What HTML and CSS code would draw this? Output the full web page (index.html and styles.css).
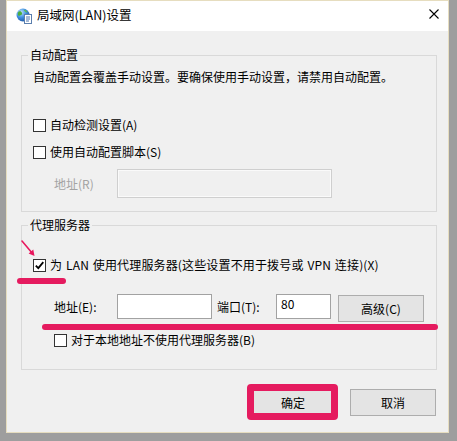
FILE: index.html
```html
<!DOCTYPE html>
<html lang="zh-CN">
<head>
<meta charset="utf-8">
<title>局域网(LAN)设置</title>
<link rel="stylesheet" href="styles.css">
</head>
<body>
<div class="window">
  <div class="titlebar">
    <svg class="app-icon" width="16" height="16" viewBox="0 0 16 16">
      <defs>
        <radialGradient id="g" cx="0.35" cy="0.3" r="0.8">
          <stop offset="0" stop-color="#bfe3ff"/>
          <stop offset="0.5" stop-color="#3d8ee0"/>
          <stop offset="1" stop-color="#1a4f9c"/>
        </radialGradient>
      </defs>
      <circle cx="7" cy="7" r="6.5" fill="url(#g)"/>
      <path d="M3 3.5c1.5-.5 2.5.3 3 1.5s-.5 2-1.5 2.3S3 8.5 2.2 7.2 2 4 3 3.5z" fill="#4caf3c"/>
      <path d="M8 1.8c1.5.2 3 1.2 3.6 2.6-.8.4-1.8 0-2.3-.6S7.6 2.4 8 1.8z" fill="#5cbf48"/>
      <rect x="8.5" y="6.5" width="7" height="9" fill="#fff" stroke="#5b7fae"/>
      <path d="M10 9h4M10 11h4M10 13h3" stroke="#4a74b0" stroke-width="1"/>
    </svg>
    <span class="title">局域网(LAN)设置</span>
    <svg class="close" width="10" height="10" viewBox="0 0 10 10">
      <path d="M0.5 0.5L9.5 9.5M9.5 0.5L0.5 9.5" stroke="#000" stroke-width="1.1"/>
    </svg>
  </div>

  <div class="client">
    <fieldset class="group group-auto">
      <legend>自动配置</legend>
      <div class="group-body">
        <div class="desc">自动配置会覆盖手动设置。要确保使用手动设置，请禁用自动配置。</div>
        <div class="check-row row-a"><span class="box"></span><span>自动检测设置(A)</span></div>
        <div class="check-row row-s"><span class="box"></span><span>使用自动配置脚本(S)</span></div>
        <div class="addr-row addr-r">
          <span class="label disabled">地址(R)</span>
          <span class="field field-disabled"></span>
        </div>
      </div>
    </fieldset>

    <fieldset class="group group-proxy">
      <legend>代理服务器</legend>
      <div class="group-body">
        <div class="check-row row-x">
          <span class="box checked">
            <svg width="11" height="11" viewBox="0 0 11 11"><path d="M1.8 5.6L4.3 8.2L9.3 2.2" fill="none" stroke="#000" stroke-width="1.8"/></svg>
          </span>
          <span class="wide">为 LAN 使用代理服务器(这些设置不用于拨号或 VPN 连接)(X)</span>
        </div>
        <div class="addr-row addr-e">
          <span class="label">地址(E):</span>
          <span class="field field-addr"></span>
          <span class="label port-label">端口(T):</span>
          <span class="field field-port">80</span>
          <span class="btn btn-adv">高级(C)</span>
        </div>
        <div class="check-row row-b"><span class="box"></span><span>对于本地地址不使用代理服务器(B)</span></div>
      </div>
    </fieldset>

    <div class="buttons">
      <span class="btn-wrap highlight"><span class="btn btn-ok">确定</span></span>
      <span class="btn btn-cancel">取消</span>
    </div>
  </div>
</div>

<div class="mark mark-check"></div>
<div class="mark mark-addr"></div>
<svg class="arrow" width="16" height="18" viewBox="0 0 16 18">
  <path d="M1 1L11.5 13.5" stroke="#e8185e" stroke-width="1.6" stroke-linecap="round"/>
  <path d="M13.5 16L7.6 13.6L12.3 9.6Z" fill="#e8185e"/>
</svg>
</body>
</html>
```

FILE: styles.css
```css
html, body {
  margin: 0;
  padding: 0;
}
body {
  position: relative;
  width: 457px;
  height: 441px;
  overflow: hidden;
  background: #9e9e9e;
  font-family: "Noto Sans CJK SC", "Microsoft YaHei", sans-serif;
  font-size: 12px;
  color: #000;
}
.window {
  margin-left: 6px;
  width: 443px;
  height: 433px;
  box-sizing: border-box;
  border: 1px solid #e6ddbf;
  background: #f0f0f0;
  display: flex;
  flex-direction: column;
}
.titlebar {
  height: 30px;
  flex: none;
  background: #fff;
  display: flex;
  align-items: center;
  padding: 0 9px 0 9px;
}
.app-icon {
  flex: none;
  margin-top: -1px;
}
.title {
  margin-left: 5px;
  line-height: 16px;
  margin-top: -2px;
  flex: 1;
  font-size: 12.5px;
}
.close {
  flex: none;
  margin-top: -4px;
}
.client {
  flex: 1;
  padding: 0 11px 0 14px;
}
.group {
  margin: 0;
  padding: 0;
  min-width: 0;
  border: 1px solid #d9d9d9;
}
.group legend {
  margin-left: 6px;
  padding: 0 2px;
  line-height: 14px;
}
.group-auto {
  margin-top: 17px;
}
.group-proxy {
  margin-top: 6px;
}
.group-body {
  padding: 0 0 0 11px;
}
.group-auto .group-body {
  padding-bottom: 13px;
}
.group-proxy .group-body {
  padding-bottom: 21px;
}
.desc {
  margin-top: 7px;
  line-height: 16px;
}
.check-row {
  display: flex;
  align-items: center;
  height: 16px;
  line-height: 16px;
}
.wide {
  word-spacing: 1px;
  letter-spacing: 0.15px;
}
.box {
  width: 13px;
  height: 13px;
  box-sizing: border-box;
  border: 1px solid #333;
  background: #fff;
  margin-right: 4px;
  flex: none;
  display: flex;
  align-items: center;
  justify-content: center;
}
.row-a { margin-top: 32px; }
.row-s { margin-top: 11px; }
.row-x { margin-top: 25px; }
.row-b { margin-top: 10px; padding-left: 21px; }

.addr-row {
  display: flex;
  align-items: flex-start;
  padding-left: 21px;
}
.addr-r {
  margin-top: 9px;
  align-items: center;
}
.addr-e {
  margin-top: 21px;
}
.label {
  width: 63px;
  flex: none;
  line-height: 16px;
}
.addr-e .label {
  padding-top: 5px;
}
.disabled {
  color: #a3a3a3;
}
.field {
  box-sizing: border-box;
  flex: none;
  background: #fff;
  border: 1px solid #a2a2a2;
  height: 25px;
  line-height: 16px;
}
.field-disabled {
  width: 215px;
  height: 29px;
  background: #f0f0f0;
  border-color: #cfcfcf;
  box-shadow: inset 0 0 0 1px #fafafa;
}
.field-addr {
  width: 95px;
}
.port-label {
  width: 59px;
  margin-left: 5px;
}
.field-port {
  width: 55px;
  padding: 1px 0 0 4px;
}
.btn {
  box-sizing: border-box;
  display: flex;
  align-items: center;
  justify-content: center;
  width: 86px;
  height: 27px;
  background: #e4e4e4;
  border: 1px solid #adadad;
  line-height: 16px;
  flex: none;
}
.btn-adv {
  margin-left: 7px;
  margin-top: 1px;
}
.buttons {
  display: flex;
  justify-content: flex-end;
  gap: 14px;
  margin-top: 19px;
  margin-right: 1px;
}
.btn-wrap {
  position: relative;
  display: block;
}
.highlight::after {
  content: "";
  position: absolute;
  left: -3px;
  right: -2px;
  top: -5px;
  bottom: -4px;
  border: 7px solid #e51b5f;
  border-radius: 4px;
}
.mark {
  position: absolute;
  background: #e51b5f;
  border-radius: 3px;
}
.mark-check {
  left: 17px;
  top: 278px;
  width: 49px;
  height: 6px;
}
.mark-addr {
  left: 42px;
  top: 324px;
  width: 396px;
  height: 6px;
}
.arrow {
  position: absolute;
  left: 21px;
  top: 240px;
}
```
